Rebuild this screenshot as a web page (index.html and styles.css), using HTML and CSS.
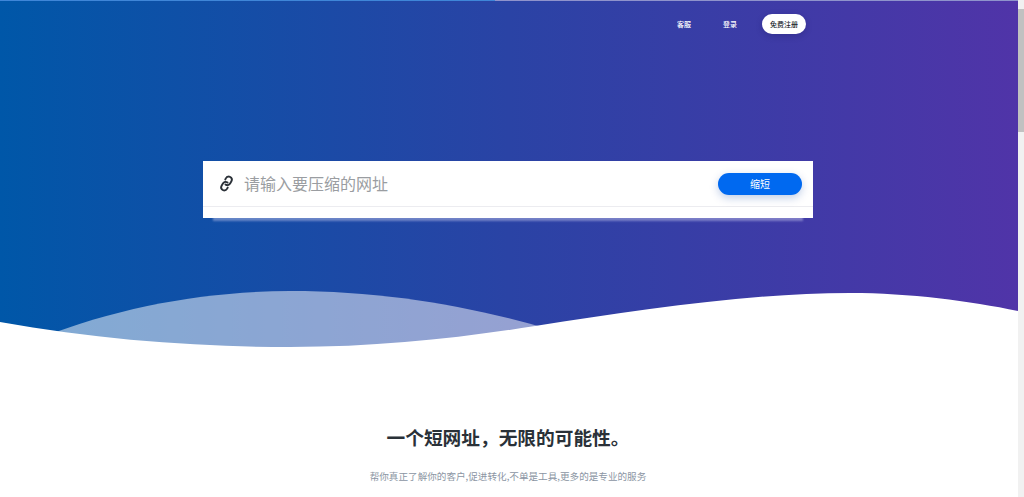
FILE: index.html
```html
<!DOCTYPE html>
<html lang="zh-CN">
<head>
<meta charset="utf-8">
<title>短网址</title>
<link rel="stylesheet" href="styles.css">
</head>
<body>
<div class="page">
  <main class="main">
    <section class="hero">
      <div class="progress"><span class="progress-done"></span><span class="progress-rest"></span></div>
      <header class="nav">
        <a class="nav-link nav-service">客服</a>
        <a class="nav-link nav-login">登录</a>
        <a class="nav-cta">免费注册</a>
      </header>
      <form class="card">
        <div class="card-row">
          <svg class="link-icon" viewBox="0 0 24 24" fill="none" stroke="#2b3138" stroke-width="3" stroke-linecap="round" stroke-linejoin="round">
            <path d="M10 13a5 5 0 0 0 7.54.54l3-3a5 5 0 0 0-7.07-7.07l-1.72 1.71"/>
            <path d="M14 11a5 5 0 0 0-7.54-.54l-3 3a5 5 0 0 0 7.07 7.07l1.71-1.71"/>
          </svg>
          <span class="placeholder">请输入要压缩的网址</span>
          <button class="shorten" type="button">缩短</button>
        </div>
        <div class="card-foot"></div>
      </form>
      <svg class="wave" viewBox="0 0 1018 80" preserveAspectRatio="none">
        <path class="wave-back" d="M40 58C120 26 210 11 290 11C385 11 470 26 552 50L552 80L40 80Z"/>
        <path class="wave-front" d="M0 42C100 60 200 67 290 67C380 67 460 58 535 46C640 30 750 13 850 13C910 13 970 21 1018 31L1018 80L0 80Z"/>
      </svg>
    </section>
    <section class="intro">
      <h2 class="intro-title">一个短网址，无限的可能性。</h2>
      <p class="intro-text">帮你真正了解你的客户,促进转化,不单是工具,更多的是专业的服务</p>
    </section>
  </main>
  <aside class="scrollbar"><span class="scroll-cap"></span><span class="scroll-thumb"></span></aside>
</div>
</body>
</html>
```

FILE: styles.css
```css
* { box-sizing: border-box; }
html, body { margin: 0; height: 100%; }
body {
  font-family: "Noto Sans CJK SC", "Liberation Sans", sans-serif;
  background: #fff;
  overflow: hidden;
}
.page { display: flex; height: 100vh; }
.main { flex: 1; min-width: 0; overflow: hidden; }
.scrollbar {
  width: 6px;
  background: #f1f1f1;
  display: flex;
  flex-direction: column;
}
.scroll-cap { height: 9px; }
.scroll-thumb { height: 123px; background: #c1c1c1; }

.hero {
  position: relative;
  height: 360px;
  padding-right: 2px;
  background: linear-gradient(90deg, #0057a8 0%, #2a43a5 50%, #5034a8 100%);
}
.progress { display: flex; height: 1px; margin-right: -2px; }
.progress-done { width: 495px; background: #3f86d8; }
.progress-rest { flex: 1; background: #8f93cc; }

.nav {
  display: flex;
  justify-content: flex-end;
  align-items: center;
  padding: 13px 210px 0 0;
  font-size: 7px;
  line-height: 20px;
  font-weight: 500;
}
.nav-link { color: #fff; }
.nav-login { margin-left: 32px; }
.nav-cta {
  margin-left: 25px;
  width: 44px;
  height: 20px;
  border-radius: 10px;
  background: #fff;
  color: #22262c;
  text-align: center;
  box-shadow: 0 2px 6px rgba(20, 20, 80, .25);
}

.card {
  position: relative;
  z-index: 1;
  width: 610px;
  margin: 127px auto 0;
  background: #fff;
  box-shadow: 0 13px 2px -10px rgba(205, 205, 240, .45);
}
.card-row {
  display: flex;
  align-items: center;
  height: 46px;
  padding: 0 11px 0 16px;
  border-bottom: 1px solid #ececf0;
}
.link-icon { width: 15px; height: 15px; flex: none; transform: rotate(-15deg); }
.placeholder {
  flex: 1;
  margin: -2px 0 0 10px;
  font-size: 16px;
  line-height: 22px;
  color: #9a9da1;
}
.shorten {
  width: 84px;
  height: 22px;
  padding: 0;
  border: 0;
  border-radius: 11px;
  background: #0069f0;
  color: #fff;
  font: inherit;
  font-size: 10px;
  box-shadow: 0 3px 8px rgba(0, 60, 160, .25);
}
.card-foot { height: 11px; }

.wave {
  position: absolute;
  left: 0;
  bottom: 0;
  width: 1018px;
  height: 80px;
  display: block;
}
.wave-back { fill: rgba(255, 255, 255, .5); }
.wave-front { fill: #fff; }

.intro { text-align: center; padding-right: 2px; }
.intro-title {
  margin: 64px 0 0;
  font-size: 18.7px;
  line-height: 26px;
  font-weight: 700;
  color: #2a3138;
}
.intro-text {
  margin: 19px 0 0;
  font-size: 9.6px;
  line-height: 14px;
  color: #8b95a3;
}
```
